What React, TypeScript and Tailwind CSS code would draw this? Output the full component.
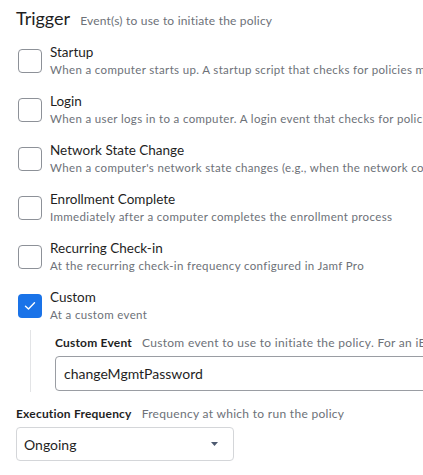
import React from "react";

const triggers = [
  {
    label: "Startup",
    desc: "When a computer starts up. A startup script that checks for policies must be configured in Jamf Pro",
    checked: false,
  },
  {
    label: "Login",
    desc: "When a user logs in to a computer. A login event that checks for policies must be configured in Jamf Pro",
    checked: false,
  },
  {
    label: "Network State Change",
    desc: "When a computer's network state changes (e.g., when the network connection changes)",
    checked: false,
  },
  {
    label: "Enrollment Complete",
    desc: "Immediately after a computer completes the enrollment process",
    checked: false,
  },
  {
    label: "Recurring Check-in",
    desc: "At the recurring check-in frequency configured in Jamf Pro",
    checked: false,
  },
  { label: "Custom", desc: "At a custom event", checked: true },
];

function Checkbox({ checked }: { checked: boolean }) {
  if (checked) {
    return (
      <div className="w-6 h-6 shrink-0 rounded-[4px] bg-[#1a73e8] flex items-center justify-center">
        <svg width="12" height="10" viewBox="0 0 12 10" fill="none">
          <path
            d="M1.5 5.2 L4.5 8 L10.5 1.8"
            stroke="white"
            strokeWidth="1.4"
            strokeLinecap="round"
            strokeLinejoin="round"
          />
        </svg>
      </div>
    );
  }
  return (
    <div className="w-6 h-6 shrink-0 rounded-[4px] border border-[#8d9198] bg-white" />
  );
}

export default function App() {
  return (
    <div
      className="w-[423px] h-[475px] overflow-hidden bg-white text-[#1f1f1f] px-4 pt-[7px]"
      style={{ fontFamily: "Lato, 'Open Sans', sans-serif" }}
    >
      {/* Header */}
      <div className="flex items-baseline gap-[10px] whitespace-nowrap">
        <h2 className="text-[18px] leading-[22px]">Trigger</h2>
        <span className="text-[12px] text-[#6d7178] tracking-[0.2px]">
          Event(s) to use to initiate the policy
        </span>
      </div>

      {/* Trigger list */}
      <div className="mt-[14px] flex flex-col gap-[15px]">
        {triggers.map((t) => (
          <div key={t.label} className="flex items-start gap-2 pl-[2px]">
            <div className="mt-[5px]">
              <Checkbox checked={t.checked} />
            </div>
            <div className="min-w-0 whitespace-nowrap">
              <div className="text-[13.5px] leading-[17px]">{t.label}</div>
              <div className="text-[11.5px] leading-[17px] text-[#6d7178] tracking-[0.35px]">
                {t.desc}
              </div>
            </div>
          </div>
        ))}
      </div>

      {/* Custom event */}
      <div className="mt-[7px] ml-[14px] border-l border-[#e3e4e6] pl-[24px] pt-[4px] pb-[1px] -mr-10">
        <div className="flex items-baseline gap-[10px] whitespace-nowrap">
          <span className="text-[12px] font-bold tracking-[0.2px]">Custom Event</span>
          <span className="text-[12px] text-[#6d7178] tracking-[0.3px]">
            Custom event to use to initiate the policy. For an iBeacon, use the
            event name
          </span>
        </div>
        <div className="mt-[4px] h-[35px] rounded-[4px] border border-[#9a9da3] flex items-center px-2 text-[14px]">
          changeMgmtPassword
        </div>
      </div>

      {/* Execution frequency */}
      <div className="mt-[13px] flex items-baseline gap-[10px] whitespace-nowrap">
        <span className="text-[12px] font-bold tracking-[0.2px]">Execution Frequency</span>
        <span className="text-[12px] text-[#6d7178] tracking-[0.3px]">
          Frequency at which to run the policy
        </span>
      </div>
      <div className="mt-[4px] w-[218px] h-[34px] rounded-[4px] border border-[#d4d6d9] flex items-center justify-between pl-[7px] pr-[15px] text-[14px]">
        <span>Ongoing</span>
        <svg width="7" height="4" viewBox="0 0 7 4">
          <path d="M0 0 H7 L3.5 4 Z" fill="#4d5a70" />
        </svg>
      </div>
    </div>
  );
}
